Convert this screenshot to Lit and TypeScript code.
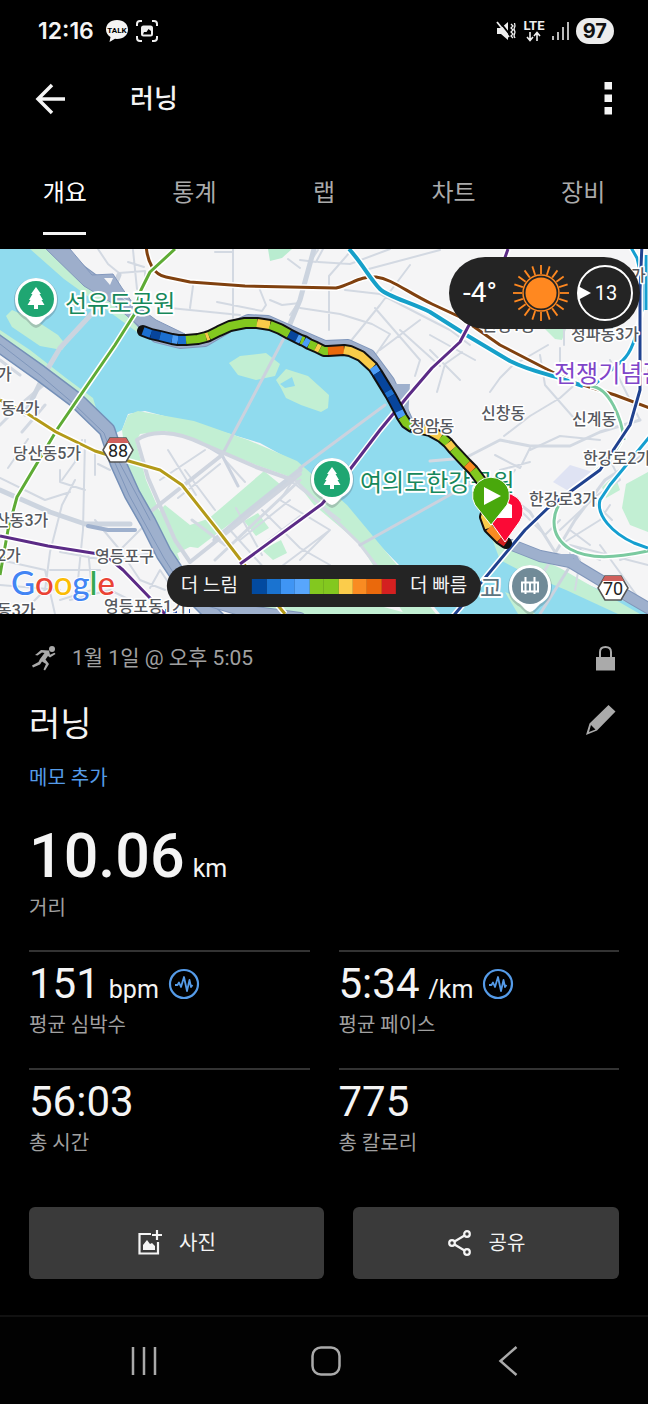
import { LitElement, html, svg, css } from "lit";
import { customElement, property, state } from "lit/decorators.js";

type Pt = [number, number];

const COLORS = {
  navy: "#07459c", blue: "#1b6fd0", sky: "#4b9df8", green: "#83c81f",
  yellow: "#f9cb49", orange: "#f98b22", deep: "#ea690c", red: "#d42020",
};

// Track pieces, coloured by pace.
const TRACK: { c: string; p: Pt[] }[] = [
  { c: COLORS.blue, p: [[143, 331], [151, 334]] },
  { c: COLORS.navy, p: [[151, 334], [160, 336]] },
  { c: COLORS.blue, p: [[160, 336], [172, 339]] },
  { c: COLORS.sky, p: [[172, 339], [178, 340]] },
  { c: COLORS.blue, p: [[178, 340], [186, 340]] },
  { c: COLORS.green, p: [[186, 340], [198, 339], [206, 337]] },
  { c: COLORS.yellow, p: [[206, 337], [209, 336]] },
  { c: COLORS.green, p: [[209, 336], [219, 331], [230, 326], [245, 323], [257, 323]] },
  { c: COLORS.yellow, p: [[257, 323], [270, 325]] },
  { c: COLORS.green, p: [[270, 325], [280, 329], [289, 334]] },
  { c: COLORS.navy, p: [[289, 334], [297, 338]] },
  { c: COLORS.sky, p: [[297, 338], [301, 340]] },
  { c: COLORS.green, p: [[301, 340], [304, 341]] },
  { c: COLORS.sky, p: [[304, 341], [309, 344]] },
  { c: COLORS.green, p: [[309, 344], [316, 347]] },
  { c: COLORS.yellow, p: [[316, 347], [320, 349]] },
  { c: COLORS.green, p: [[320, 349], [324, 351], [328, 351]] },
  { c: COLORS.deep, p: [[328, 351], [344, 350]] },
  { c: COLORS.yellow, p: [[344, 350], [350, 351], [361, 356], [373, 367]] },
  { c: COLORS.sky, p: [[373, 367], [377, 373]] },
  { c: COLORS.navy, p: [[377, 373], [388, 391]] },
  { c: COLORS.blue, p: [[388, 391], [391, 396]] },
  { c: COLORS.navy, p: [[391, 396], [399, 411]] },
  { c: COLORS.sky, p: [[399, 411], [402, 417]] },
  { c: COLORS.green, p: [[402, 417], [406, 423], [412, 427]] },
  { c: COLORS.yellow, p: [[412, 427], [430, 431], [441, 437]] },
  { c: COLORS.green, p: [[441, 437], [448, 443]] },
  { c: COLORS.yellow, p: [[448, 443], [453, 449]] },
  { c: COLORS.green, p: [[453, 449], [467, 464]] },
  { c: COLORS.orange, p: [[467, 464], [473, 470]] },
  { c: COLORS.green, p: [[473, 470], [485, 486], [489, 503]] },
  { c: COLORS.yellow, p: [[489, 503], [485, 517], [489, 528]] },
  { c: COLORS.orange, p: [[489, 528], [500, 539]] },
  { c: COLORS.red, p: [[500, 539], [506, 543]] },
];

const pts = (p: Pt[]) => p.map((q) => q.join(",")).join(" ");
const OUTLINE = TRACK.flatMap((s, i) => (i ? s.p.slice(1) : s.p));

const LEGEND = ["#024aa0", "#1a73d0", "#3f95f4", "#58a6fc", "#83c81f", "#83c81f", "#fbcc4b", "#f98b22", "#ea690c", "#d42020"];

const LABELS: { t: string; x: number; y: number }[] = [
  { t: "가", x: -3, y: 380 },
  { t: "동4가", x: 1, y: 414 },
  { t: "당산동5가", x: 13, y: 459 },
  { t: "산동3가", x: -5, y: 526 },
  { t: "2가", x: -3, y: 561 },
  { t: "영등포구", x: 95, y: 562 },
  { t: "동3가", x: -3, y: 616 },
  { t: "영등포동1가", x: 104, y: 612 },
  { t: "신창동", x: 481, y: 419 },
  { t: "신계동", x: 572, y: 425 },
  { t: "원정1동", x: 482, y: 331 },
  { t: "청파동3가", x: 571, y: 340 },
  { t: "가", x: 631, y: 281 },
  { t: "한강로2가", x: 583, y: 464 },
  { t: "한강로3가", x: 529, y: 505 },
];

@customElement("route-map")
class RouteMap extends LitElement {
  static styles = css`
    :host { display: block; position: relative; overflow: hidden; background: #f5f5f5; }
    .canvas { display: block; width: 100%; height: auto; }
    .area { font: 500 16px Roboto, "Noto Sans CJK KR", sans-serif; fill: #56595e; stroke: #fff; stroke-width: 3px; paint-order: stroke; stroke-linejoin: round; }
    .poi { font: 400 24px Roboto, "Noto Sans CJK KR", sans-serif; fill: #16885b; stroke: #fff; stroke-width: 4px; paint-order: stroke; stroke-linejoin: round; }
    .violet { fill: #7f45c9; }
    .slate { fill: #5c7480; }
    .shield { font: 400 18px Roboto, sans-serif; fill: #222; text-anchor: middle; }
    .google { font: 500 33px Lato, sans-serif; stroke: #fff; stroke-width: 2px; paint-order: stroke; }
    .weather {
      position: absolute; top: 8px; right: 8px; height: 72px; padding: 0 7px 0 14px; box-sizing: border-box;
      display: flex; align-items: center; gap: 16px; border-radius: 36px; background: #242424; color: #fff;
      font: 400 28px/32px Roboto, sans-serif;
    }
    .weather svg { display: block; }
    .icons { display: flex; gap: 8px; }
    .wind { font: 400 20px Roboto, sans-serif; fill: #fff; text-anchor: middle; }
    .legend {
      position: absolute; bottom: 7px; left: 50%; transform: translateX(-50%); height: 42px; padding: 0 14px;
      display: flex; align-items: center; gap: 14px; border-radius: 21px; background: #242424; color: #f4f4f4;
      font: 400 19px/24px Roboto, "Noto Sans CJK KR", sans-serif; white-space: nowrap;
    }
    .scale { display: grid; grid-template-columns: repeat(10, 1fr); width: 144px; height: 15px; }
    .step { display: block; }
  `;

  private pin(x: number, y: number, fill: string, glyph: unknown) {
    return svg`<g transform="translate(${x} ${y})">
      <path d="M0 28C-4 27-6 24-10 20C-17 16-22 10-22 0A22 22 0 0 1 22 0C22 10 17 16 10 20C6 24 4 27 0 28Z" fill="#445" opacity=".25" transform="translate(0 1)"/>
      <path d="M0 26C-4 25-6 22-10 18C-17 14-21 9-21 0A21 21 0 0 1 21 0C21 9 17 14 10 18C6 22 4 25 0 26Z" fill="#fff"/>
      <circle r="18" fill=${fill}/>${glyph}</g>`;
  }

  private tree() {
    return svg`<path d="M0-12L5-5H3.500L7 1H5.500L8.500 6H2V10H-2V6H-8.500L-5.500 1H-7L-3.500-5H-5Z" fill="#fff"/>`;
  }

  private line(d: string, c: string, w = 3) {
    return svg`<path d=${d} stroke="#fff" stroke-width=${w + 3}/><path d=${d} stroke=${c} stroke-width=${w}/>`;
  }

  private shield(x: number, y: number, t: string) {
    return svg`<path d="M${x - 8} ${y - 12}H${x + 8}L${x + 15} ${y}L${x + 8} ${y + 12}H${x - 8}L${x - 15} ${y}Z" fill="#fff" stroke="#555" stroke-width="1.500"/>
      <path d="M${x - 8} ${y - 12}H${x + 8}L${x + 11} ${y - 7}H${x - 11}Z" fill="#d0605c"/>
      <text class="shield" x=${x} y=${y + 7}>${t}</text>`;
  }

  render() {
    const rays = Array.from({ length: 20 }, (_, i) => i * 18);
    return html`
      <svg class="canvas" viewBox="0 249 648 365" role="img" aria-label="러닝 경로 지도">
        <rect y="249" width="648" height="365" fill="#f5f5f6"/>
        <!-- river -->
        <path d="M0 249H46L90 290L140 328L180 343L205 340L245 323L268 325L326 351L350 351L372 367L405 424L440 437L475 472L487 500L486 525L510 546L560 572L600 590L648 612V620H470L440 614L400 566L350 515L300 465L260 443L210 428L145 411L128 414L122 430L110 436L94 405L60 380L0 336Z" fill="#90dbee"/>
        <!-- parks -->
        <g fill="#c2efd3">
          <path d="M30 249H46L90 286L140 326L137 332L100 305L64 279Z"/>
          <path d="M6 316L12 310L35 320L58 335L66 345L62 350L40 346L12 327Z"/>
          <path d="M0 330L30 350L66 378L93 398L100 421L85 408L50 380L0 342Z"/>
          <path d="M122 430L128 415L138 411L194 421L248 440L297 461L347 505L397 565L436 614H404L359 543L314 505L293 478L256 465L207 445L165 431L140 434L136 442L146 480L165 524L180 560L172 562L140 510L126 460Z"/>
          <path d="M149 521L165 505L190 525L219 515L221 531L172 556Z"/>
          <path d="M178 545L264 471L281 485L198 548Z"/>
          <path d="M244 521L258 513L269 528L256 536Z"/>
          <path d="M262 550L281 540L287 553L273 560Z"/>
          <path d="M229 363L240 356L266 353L280 364L275 376L256 380L238 375Z"/>
          <path d="M276 380L286 369L308 376L329 395L328 408L321 412L301 405L286 398L281 388Z"/>
          <path d="M268 249H292L282 258L270 261Z" fill="#b9ecd0"/>
          <path d="M545 329H566L562 340L555 339Z"/>
          <path d="M602 487L615 475L620 490L606 498ZM648 472V532L630 525L622 508L626 484Z"/>
          <path d="M488 528L515 548L560 568L640 614H618L566 590L525 573L500 560Z"/>
          <path d="M505 592L525 600L535 614H518Z"/>
          <path d="M230 606L270 600L380 606L410 614H235Z"/>
        </g>
        <path d="M280 384L292 377L295 386L285 388Z" fill="#90dbee"/>
        <path d="M553 482L570 465L596 473L572 493Z" fill="#dfe3f3"/>

        <g fill="none" stroke="#d3d9e2" stroke-linecap="round" stroke-linejoin="round">
          <!-- minor streets -->
          <path stroke-width="2" d="M98 249L108 264L119 273L145 271M133 250L137 289M128 262L144 267M145 271V280M190 308L193 286M160 307L240 315M233 249V318M215 252H233M217 302L262 311M258 285L266 305L262 311M296 306L290 315M288 259L300 268M270 300L282 305L300 303M310 262L318 250M329 330V276L350 252M318 262L350 264L390 249M323 249L316 262L300 260M300 308L340 314L372 324L390 334M345 290L380 294L450 330L470 345M350 342L380 305L410 265M375 308L420 360L415 376M390 334L372 360M400 330L440 366M380 350L420 320M365 270L440 250M430 335L475 360M430 350L460 380M437 392L445 364L462 352M490 392L500 378L512 366L548 345M540 355L545 385L580 425M504 436L530 416L560 398L580 380M560 348V385M564 300V345M610 360L640 420M530 450L560 436L600 440M495 455L520 468L530 448M500 470L530 462M520 510L545 535L560 520M515 470L500 490M560 545L600 520L610 505M570 530L590 545M590 500L620 480L610 460M560 530L592 500L612 520M575 590L580 560L570 545L600 560M600 545L640 600M620 560L648 550M570 560V545L648 565"/>
          <path stroke-width="2" d="M8 468L28 439M0 478L45 500L70 492M60 470V482L85 490M62 480L75 462L82 440M85 440L83 530L78 580M30 605L45 590L50 552L62 505L75 480M50 570H100M95 520L120 550L140 580L165 590M88 550L92 590L60 600M0 560L45 570L55 614M70 600L110 590L130 600M98 464L110 470M95 450V475M115 555L150 520M150 588L160 570L180 600M0 585L60 590M60 552L105 560L160 552"/>
          <path stroke-width="2" d="M160 480L205 450M178 498L220 464M185 470L215 510M168 450L196 495M236 508L262 555M262 510L300 548L330 565M280 500L330 530L300 560M290 480L340 520M270 575L330 530M300 470L280 500M225 460L245 482M240 540L290 500M252 553L300 516M230 530L275 580"/>
          <path stroke-width="3" d="M215 560L300 480M192 520L225 545M0 425L20 405L55 375M22 432L45 405M0 360L20 375M293 478L359 543L395 590"/>
          <path stroke-width="3" d="M430 461L465 458L500 440L530 446L570 446L600 432L640 420M500 489L530 512L560 560M545 570L575 520L605 480L648 452"/>
          <!-- wider streets -->
          <path stroke-width="5" d="M314 249L300 300L285 336M119 275L112 292L60 348L44 375L25 414M0 490L50 512L85 524L130 524M215 540L250 510L300 470" stroke="#ccd4df"/>
          <path stroke-width="3" d="M285 336L246 410L222 455L238 486M300 468L385 405M360 545L480 478M540 614L580 550M222 455L207 446" stroke="#cbd2de"/>
          <path stroke-width="4" d="M137 440C150 430 175 430 203 444L256 467L293 480M137 440L148 478L175 540L190 562M150 512L222 455M190 562L300 474" stroke="#cfd5df"/>
          <!-- expressways -->
          <path stroke="#7f96bb" stroke-width="10" d="M52 244L82 270L112 292L143 325L156 338L180 344L205 342L232 326L248 319L268 320L295 332L325 345L348 344L370 354L390 381L408 420"/>
          <path stroke="#9daecb" stroke-width="8" d="M52 244L82 270L112 292L143 325L156 338L180 344L205 342L232 326L248 319L268 320L295 332L325 345L348 344L370 354L390 381L408 420"/>
          <path stroke="#7590b8" stroke-width="17" d="M-5 341L40 373L76 400L107 430L118 463L132 494L148 522L164 554L188 590L220 622"/>
          <path stroke="#9eb0cd" stroke-width="14" d="M-5 341L40 373L76 400L107 430L118 463L132 494L148 522L164 554L188 590L220 622"/>
          <path stroke="#7f96bb" stroke-width="1" d="M0 344L40 375L74 404L104 433L115 463L129 495L164 558L188 596M118 460L150 520"/>
          <path stroke="#8197bb" stroke-width="12" d="M512 545L540 556L570 562L600 580L655 612M200 598L240 610L300 618"/>
          <path stroke="#9eb0cd" stroke-width="10" d="M512 545L540 556L570 562L600 580L655 612M200 598L240 610L300 618"/>
          <path stroke="#9eb0cd" stroke-width="4" d="M560 556L575 556L580 566M88 526L108 530H135"/>
        </g>
        <path d="M46 249H70L92 275L113 274L122 288L132 302L156 320L185 334L160 338L140 327L112 303L84 286Z" fill="#9daecb" stroke="#8398bd"/>
        <path d="M104 278L113 278L110 285ZM120 296L132 304L140 312Z" fill="#f5f5f6"/>
        <path d="M388 384H410L408 420L398 408Z" fill="#9eb0cd"/>

        <!-- transit lines -->
        <g fill="none" stroke-linejoin="round">
          ${this.line("M146 244C147 262 154 275 166 277L190 282L245 286L336 288C352 284 360 276 376 277C392 279 405 291 432 304L460 317L500 345L560 376L580 384L615 395L655 410", "#80410f")}
          ${this.line("M349 249C362 263 370 279 380 289C388 297 410 302 430 312L468 336L510 361C530 371 548 374 562 379L583 386", "#16a0c9", 4)}
          ${this.line("M590 386C610 387 622 420 624 440M624 430C622 450 600 470 575 488C548 507 548 535 570 549C590 560 615 558 648 551", "#7bcaa0")}
          ${this.line("M175 249L150 272L141 290L134 315L115 345L58 428L17 497L8 530L0 575", "#5eab35")}
          ${this.line("M0 400L28 414L56 432L95 451L118 458L160 470L182 485L220 533L243 563L285 614", "#b39a18")}
          ${this.line("M508 249L502 266L468 327L460 342L432 368L408 396L380 430L348 472L322 504L240 564", "#5b2b86")}
          ${this.line("M0 536L48 546L105 555L123 570L150 598L165 614", "#5b2b86")}
          ${this.line("M629 244L637 258L642 280V310C635 340 632 352 622 361L595 384M646 255V310", "#159fd0")}
          ${this.line("M655 430L610 485L600 500C596 515 612 533 634 543L648 548", "#159fd0")}
          ${this.line("M642 244L640 290V390L630 425L600 470L548 508L525 530L450 620", "#20428f")}
        </g>
        <path d="M165 611H190" stroke="#2359b5" stroke-width="4" stroke-dasharray="4 4"/>

        ${LABELS.map((l) => svg`<text class="area" x=${l.x} y=${l.y}>${l.t}</text>`)}
        <text class="poi" x="65" y="312">선유도공원</text>
        <text class="poi" x="360" y="491">여의도한강공원</text>
        <text class="poi violet" x="554" y="382">전쟁기념관</text>
        <text class="poi slate" x="480" y="597">교</text>

        <!-- recorded track -->
        <g fill="none" stroke-linejoin="round">
          <polyline points=${pts(OUTLINE)} stroke="#111" stroke-width="12" stroke-linecap="round"/>
          ${TRACK.map((s) => svg`<polyline points=${pts(s.p)} stroke=${s.c} stroke-width="8"/>`)}
        </g>
        <text class="area" x="410" y="432">청암동</text>

        ${this.pin(36, 299, "#1fa672", this.tree())}
        ${this.pin(332, 479, "#1fa672", this.tree())}
        ${this.pin(530, 586, "#718b98", svg`<path d="M-9-3.500H9M-9 5.500H9M-4.500-9V8M4.500-9V8M0-3V5M-8-3V5M8-3V5" fill="none" stroke="#fff" stroke-width="2"/>`)}
        ${this.shield(118, 450, "88")}
        ${this.shield(613, 588, "70")}

        <path d="M505 542L490 521A18 18 0 1 1 520 521Z" fill="#fb0a36" stroke="#fff"/>
        <path d="M496 518V507L506 502L512 505V518Z" fill="#fff"/>
        <path d="M491 525L475 505A18.500 18.500 0 1 1 507 505Z" fill="#49a80c" stroke="#fff"/>
        <path d="M484 487L501 496L484 505Z" fill="#fff"/>

        <text class="google" x="11" y="595"><tspan fill="#4285f4">G</tspan><tspan fill="#ea4335">o</tspan><tspan fill="#fbbc05">o</tspan><tspan fill="#4285f4">g</tspan><tspan fill="#34a853">l</tspan><tspan fill="#ea4335">e</tspan></text>
      </svg>

      <div class="weather">
        <span>-4°</span>
        <div class="icons">
          <svg width="56" height="56" viewBox="-28 -28 56 56" aria-hidden="true">
            <circle r="15.500" fill="#ff8820"/><circle r="18" fill="none" stroke="#ff8820" stroke-width="1.500"/>
            ${rays.map((a) => svg`<path d="M0-19V-28" stroke="#ff8820" stroke-width="1.800" transform="rotate(${a})"/>`)}
          </svg>
          <svg width="56" height="56" viewBox="-28 -28 56 56" aria-hidden="true">
            <circle r="27" fill="none" stroke="#fff" stroke-width="2"/>
            <path d="M-27-7L-14 0L-27 7Z" fill="#fff"/>
            <text class="wind" x="1" y="7">13</text>
          </svg>
        </div>
      </div>

      <div class="legend">
        <span>더 느림</span>
        <div class="scale">${LEGEND.map((c) => html`<i class="step" style="background:${c}"></i>`)}</div>
        <span>더 빠름</span>
      </div>`;
  }
}

@customElement("stat-item")
class StatItem extends LitElement {
  @property() value = "";
  @property() unit = "";
  @property() label = "";
  @property({ type: Boolean }) chart = false;

  static styles = css`
    :host { display: block; border-top: 2px solid #333; height: 116px; }
    .row { display: flex; align-items: baseline; gap: 9px; padding-top: 6px; color: #f4f4f4; }
    .value { font-size: 42px; line-height: 52px; }
    .unit { font-size: 25px; line-height: 28px; }
    .chart { padding: 0; border: 0; background: none; align-self: center; height: 32px; }
    .chart svg { display: block; }
    .label { font-size: 20px; line-height: 30px; color: #a0a0a0; }
  `;

  render() {
    return html`
      <div class="row">
        <span class="value">${this.value}</span>
        ${this.unit ? html`<span class="unit">${this.unit}</span>` : ""}
        ${this.chart ? html`<button class="chart" aria-label="${this.label} 차트">
          <svg width="32" height="32" viewBox="0 0 32 32" fill="none" stroke="#559be8">
            <circle cx="16" cy="16" r="14" stroke-width="2.200"/>
            <path d="M7 17H9.500L11 14.500L13 19L16 9L19 23L21.500 12L23 19L24.500 17" stroke-width="1.800" stroke-linejoin="round"/>
          </svg></button>` : ""}
      </div>
      <div class="label">${this.label}</div>`;
  }
}

@customElement("app-root")
class AppRoot extends LitElement {
  @state() private tab = 0;

  static styles = css`
    :host { display: flex; flex-direction: column; min-height: 100vh; background: #000; color: #f4f4f4; font-family: Roboto, "Noto Sans CJK KR", sans-serif; }
    button { font: inherit; color: inherit; border: 0; padding: 0; margin: 0; background: none; cursor: pointer; }
    svg { display: block; }
    .status { display: flex; align-items: center; justify-content: space-between; height: 62px; padding: 0 34px 0 38px; }
    .cluster { display: flex; align-items: center; gap: 7px; }
    .clock { font: 600 23px/28px Inter, Roboto, sans-serif; margin-right: 4px; }
    .battery { padding: 0 7px; border-radius: 13px; background: #ececec; color: #111; font: 700 20px/26px Inter, Roboto, sans-serif; }
    .talk { font: 700 8px Roboto, sans-serif; text-anchor: middle; }
    .lte { font: 700 13px Roboto, sans-serif; fill: #eee; text-anchor: middle; }
    .bar { display: flex; align-items: center; height: 74px; padding: 0 32px 0 34px; }
    .heading { flex: 1; margin: 0; padding-left: 62px; font-size: 26px; line-height: 36px; font-weight: 500; }
    .tabs { display: grid; grid-template-columns: repeat(5, 1fr); height: 99px; padding-bottom: 14px; }
    .tab { display: flex; flex-direction: column; align-items: center; justify-content: flex-end; gap: 23px; font-size: 24px; line-height: 32px; color: #aaa; }
    .tab::after { content: ""; width: 43px; height: 3px; background: transparent; }
    .tab.on { color: #fff; }
    .tab.on::after { background: #f4f4f4; }
    .content { padding: 28px 29px 36px; }
    .meta { display: flex; align-items: center; gap: 12px; height: 32px; font-size: 21px; line-height: 32px; color: #a0a0a0; }
    .when { flex: 1; }
    .title-row { display: flex; align-items: center; justify-content: space-between; padding: 25px 0 0; }
    .title { margin: 0; font-size: 34px; line-height: 50px; font-weight: 400; }
    .memo { display: block; width: max-content; padding-top: 15px; color: #559be8; font-size: 20px; line-height: 28px; text-decoration: none; }
    .distance { display: flex; align-items: baseline; gap: 8px; padding-top: 26px; }
    .big { font-size: 61px; line-height: 76px; font-weight: 500; }
    .km { font-size: 25px; line-height: 28px; }
    .label { font-size: 20px; line-height: 28px; color: #a0a0a0; }
    .stats { display: grid; grid-template-columns: 1fr 1fr; column-gap: 29px; padding-top: 28px; }
    .actions { display: flex; gap: 29px; padding-top: 21px; }
    .action { flex: 266 1 0; height: 72px; display: flex; align-items: center; justify-content: center; gap: 16px; border-radius: 6px; background: #3a3a3a; font-size: 20px; line-height: 28px; }
    .action.wide { flex-grow: 295; }
    .nav { flex: 1; display: grid; grid-template-columns: repeat(3, 182px); justify-content: center; align-items: center; padding-left: 4px; border-top: 2px solid #111; background: #020202; min-height: 86px; }
    .key { display: flex; justify-content: center; align-items: center; height: 64px; }
  `;

  render() {
    return html`
      <div class="status">
        <div class="cluster">
          <span class="clock">12:16</span>
          <svg width="24" height="24" viewBox="0 0 24 24"><path d="M12 1C5.500 1 1 5 1 10.500C1 14 3 16.500 5.500 18L4.500 23L10 19.800L12 20C18.500 20 23 16 23 10.500S18.500 1 12 1Z" fill="#f4f4f4"/><text class="talk" x="12" y="13.500">TALK</text></svg>
          <svg width="22" height="22" viewBox="0 0 22 22" fill="none" stroke="#eee" stroke-width="2"><path d="M1 6V4Q1 1 4 1H6M16 1H18Q21 1 21 4V6M21 16V18Q21 21 18 21H16M6 21H4Q1 21 1 18V16"/><path fill="#eee" stroke="none" fill-rule="evenodd" d="M7.500 5.500H14.500Q17 5.500 17 8V14Q17 16.500 14.500 16.500H7.500Q5 16.500 5 14V8Q5 5.500 7.500 5.500ZM7 14.500H15V11L12.500 9L10.500 12H8Z"/></svg>
        </div>
        <div class="cluster">
          <svg width="20" height="22" viewBox="0 0 20 22"><path d="M1 8H5L12 2V20L5 14H1Z" fill="#eee"/><path d="M3 1L15 16" stroke="#000" stroke-width="2"/><path d="M1 2L13 17" stroke="#eee" stroke-width="1.800"/><path d="M15 4L17 6L15 8L17 10L15 12L17 14L15 16L17 18M18.500 3L19 6L18 9L19 12L18 16L19 18" fill="none" stroke="#eee" stroke-width="1.300"/></svg>
          <svg width="22" height="24" viewBox="0 0 22 24"><text class="lte" x="11" y="11">LTE</text><path d="M7 13V21M4 18L7 21.500L10 18M14 22V14M11 17L14 13.500L17 17" fill="none" stroke="#eee" stroke-width="1.600"/></svg>
          <svg width="17" height="20" viewBox="0 0 17 20" stroke="#bbb" stroke-width="2"><path d="M1 19V15M6 19V11M11 19V6M16 19V1"/></svg>
          <span class="battery">97</span>
        </div>
      </div>

      <header class="bar">
        <button aria-label="뒤로"><svg width="34" height="34" viewBox="0 0 34 34" fill="none" stroke="#f4f4f4" stroke-width="3.500"><path d="M31 17H5M18 3L4 17L18 31"/></svg></button>
        <h1 class="heading">러닝</h1>
        <button aria-label="더보기"><svg width="16" height="34" viewBox="0 0 16 34" fill="#f4f4f4"><path d="M4.500 0H12V7.500H4.500ZM4.500 12.500H12V20H4.500ZM4.500 25H12V32.500H4.500Z"/></svg></button>
      </header>

      <nav class="tabs">
        ${["개요", "통계", "랩", "차트", "장비"].map((t, i) => html`<button class="tab ${i === this.tab ? "on" : ""}" @click=${() => (this.tab = i)}>${t}</button>`)}
      </nav>

      <route-map></route-map>

      <main class="content">
        <div class="meta">
          <svg width="31" height="28" viewBox="0 0 31 28"><circle cx="23" cy="5" r="3" fill="#aaa"/><path d="M20 6.500L12 6L8 9.500L6 11L8.500 11.500L13 8.500L15.500 9L11 15L9.500 18L3 21.500L4 23.500L11 20.500L13 17.500L17 20L14.500 25.500L16 26.500L20 20L16.500 15.500L19 12L21 13.500L26.500 10L25.500 8.800L21 10.800Z" fill="#aaa"/></svg>
          <span class="when">1월 1일 @ 오후 5:05</span>
          <svg width="28" height="28" viewBox="0 0 28 28" fill="none"><path d="M9 13V8Q9 3 14.500 3Q20 3 20 8V13" stroke="#aaa" stroke-width="2"/><path d="M5 13H24V26.500H5Z" fill="#aaa"/></svg>
        </div>
        <div class="title-row">
          <h2 class="title">러닝</h2>
          <button aria-label="이름 편집"><svg width="34" height="44" viewBox="0 0 34 44"><path fill="#aaa" fill-rule="evenodd" d="M23.500 3L30.500 9.500L12 28.500L1 33L4.500 21.500ZM6 23L4 30L10.500 27.500Z"/></svg></button>
        </div>
        <a class="memo" href="#memo">메모 추가</a>

        <div class="distance"><span class="big">10.06</span><span class="km">km</span></div>
        <div class="label">거리</div>

        <div class="stats">
          <stat-item value="151" unit="bpm" label="평균 심박수" chart></stat-item>
          <stat-item value="5:34" unit="/km" label="평균 페이스" chart></stat-item>
          <stat-item value="56:03" label="총 시간"></stat-item>
          <stat-item value="775" label="총 칼로리"></stat-item>
        </div>

        <div class="actions">
          <button class="action wide"><svg width="26" height="26" viewBox="0 0 26 26" fill="none" stroke="#f4f4f4" stroke-width="2.200"><path d="M14 4H2.500V23.500H21V12M20 0V10M15 5H25"/><path d="M6 20V15L10 10L13 14L15 13L18 16V20Z" fill="#f4f4f4" stroke="none"/></svg>사진</button>
          <button class="action"><svg width="26" height="26" viewBox="0 0 26 26" fill="none" stroke="#f4f4f4" stroke-width="2.200"><circle cx="5" cy="13" r="2.800"/><circle cx="20" cy="4" r="2.800"/><circle cx="20" cy="22" r="2.800"/><path d="M7.500 11.500L17.500 5.500M7.500 14.500L17.500 20.500"/></svg>공유</button>
        </div>
      </main>

      <nav class="nav">
        <button class="key" aria-label="최근 앱"><svg width="28" height="34" viewBox="0 0 28 34" stroke="#aaa" stroke-width="2.500"><path d="M3 3V31M14 3V31M25 3V31"/></svg></button>
        <button class="key" aria-label="홈"><svg width="34" height="34" viewBox="0 0 34 34" fill="none" stroke="#aaa" stroke-width="2.500"><rect x="3.500" y="3.500" width="27" height="27" rx="8.500"/></svg></button>
        <button class="key" aria-label="이전"><svg width="20" height="32" viewBox="0 0 20 32" fill="none" stroke="#aaa" stroke-width="2.500"><path d="M18.500 2L2.500 16L18.500 30"/></svg></button>
      </nav>`;
  }
}
